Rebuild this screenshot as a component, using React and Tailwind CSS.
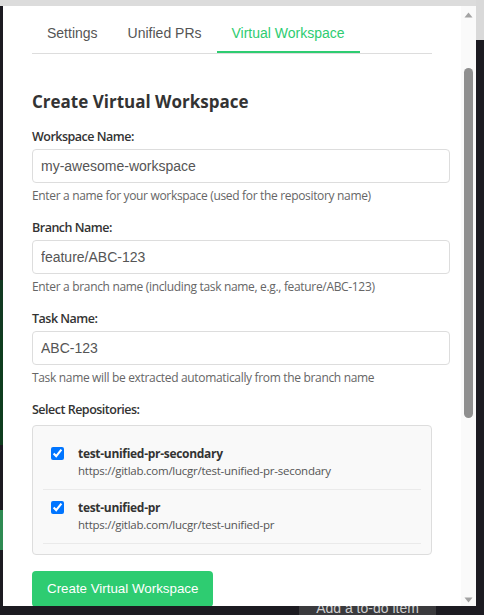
import React from 'react';

const sans = { fontFamily: '"Open Sans", "Noto Sans", sans-serif' };

const Field = ({ label, value, help }) => (
  <div className="mb-[15px]">
    <label className="block text-[12.5px] leading-[18px] font-semibold tracking-[-0.5px] text-[#333] mb-[3px]" style={sans}>
      {label}
    </label>
    <input
      type="text"
      defaultValue={value}
      className="block w-[418px] h-[34px] px-[8px] border border-[#ddd] rounded-[4px] text-[14px] text-[#555] font-['Liberation_Sans',Arial,sans-serif] bg-white outline-none"
    />
    <div className="mt-[5px] text-[12px] leading-[16px] tracking-[-0.33px] text-[#666]" style={sans}>
      {help}
    </div>
  </div>
);

const repos = [
  { name: 'test-unified-pr-secondary', url: 'https://gitlab.com/lucgr/test-unified-pr-secondary' },
  { name: 'test-unified-pr', url: 'https://gitlab.com/lucgr/test-unified-pr' },
];

const App = () => {
  const tabs = ['Settings', 'Unified PRs', 'Virtual Workspace'];

  return (
    <div className="relative w-[484px] h-[615px] bg-[#1c1b21] overflow-hidden">
      {/* page behind the popup */}
      <div className="absolute top-0 left-0 w-[484px] h-[6px] bg-[#dcdcdc]" />
      <div className="absolute top-0 right-0 w-[8px] h-[40px] bg-[#d9d9d9]" />
      <div className="absolute left-0 top-[280px] w-[3px] h-[60px] bg-[#123a22]" />
      <div className="absolute left-0 top-[335px] w-[3px] h-[110px] bg-[#0f3d1f]" />
      <div className="absolute left-0 top-[510px] w-[3px] h-[40px] bg-[#2f8a52]" />
      <div className="absolute left-[299px] top-[604px] w-[137px] h-[20px] bg-[#3a3a3d] text-[#cfcfcf] text-[14px] leading-[20px] text-center font-['Liberation_Sans',Arial,sans-serif] overflow-hidden">
        <span className="relative top-[-6px]">Add a to-do item</span>
      </div>

      {/* extension popup */}
      <div className="absolute left-[3px] top-[6px] w-[473px] h-[600px] bg-white flex overflow-hidden">
        <div className="flex-1 overflow-hidden pl-[29px] pt-[9px]">
          <div className="w-[400px]">
            <div className="flex border-b border-[#ddd]">
              {tabs.map((t, i) => (
                <div
                  key={t}
                  className={
                    i === 2
                      ? 'px-[15px] py-[10px] text-[14px] leading-[16px] border-b-2 border-[#2ecc71] text-[#2ecc71] font-["Liberation_Sans",Arial,sans-serif]'
                      : 'px-[15px] py-[10px] text-[14px] leading-[16px] border-b-2 border-transparent text-[#555] font-["Liberation_Sans",Arial,sans-serif]'
                  }
                >
                  {t}
                </div>
              ))}
            </div>

            <h2 className="mt-[36px] mb-[14px] text-[17px] leading-[24px] font-bold text-[#333]" style={sans}>
              Create Virtual Workspace
            </h2>

            <Field
              label="Workspace Name:"
              value="my-awesome-workspace"
              help="Enter a name for your workspace (used for the repository name)"
            />
            <Field
              label="Branch Name:"
              value="feature/ABC-123"
              help="Enter a branch name (including task name, e.g., feature/ABC-123)"
            />
            <Field
              label="Task Name:"
              value="ABC-123"
              help="Task name will be extracted automatically from the branch name"
            />

            <label className="block text-[12.5px] leading-[18px] font-semibold tracking-[-0.5px] text-[#333] mb-[6px]" style={sans}>
              Select Repositories:
            </label>
            <div className="border border-[#ddd] rounded-[4px] bg-[#f9f9f9] p-[10px]">
              {repos.map((r) => (
                <div key={r.name} className="flex items-start px-[8px] py-[10px] border-b border-[#eaeaea]">
                  <input
                    type="checkbox"
                    defaultChecked
                    className="w-[13px] h-[13px] mt-[1px] mr-[14px] shrink-0 accent-[#0075ff]"
                  />
                  <div style={sans}>
                    <div className="text-[12px] leading-[16px] font-bold tracking-[-0.3px] text-[#333]">{r.name}</div>
                    <div className="text-[11.5px] leading-[17px] tracking-[-0.25px] text-[#555]">{r.url}</div>
                  </div>
                </div>
              ))}
            </div>

            <button className="mt-[16px] px-[15px] h-[36px] rounded-[4px] bg-[#2ecc71] text-white text-[13.333px] font-['Liberation_Sans',Arial,sans-serif]">
              Create Virtual Workspace
            </button>
          </div>
        </div>

        {/* scrollbar */}
        <div className="w-[15px] bg-[#fafafa] flex flex-col items-center">
          <svg width="9" height="6" viewBox="0 0 9 6" className="mt-[6px]">
            <path d="M4.5 0.5 L8.5 5.5 L0.5 5.5 Z" fill="#a3a3a3" />
          </svg>
          <div className="mt-[50px] w-[9px] h-[350px] rounded-full bg-[#8f8f8f]" />
          <div className="flex-1" />
          <svg width="9" height="6" viewBox="0 0 9 6" className="mb-[3px]">
            <path d="M0.5 0.5 L8.5 0.5 L4.5 5.5 Z" fill="#a3a3a3" />
          </svg>
        </div>
      </div>
    </div>
  );
};

export default App;
